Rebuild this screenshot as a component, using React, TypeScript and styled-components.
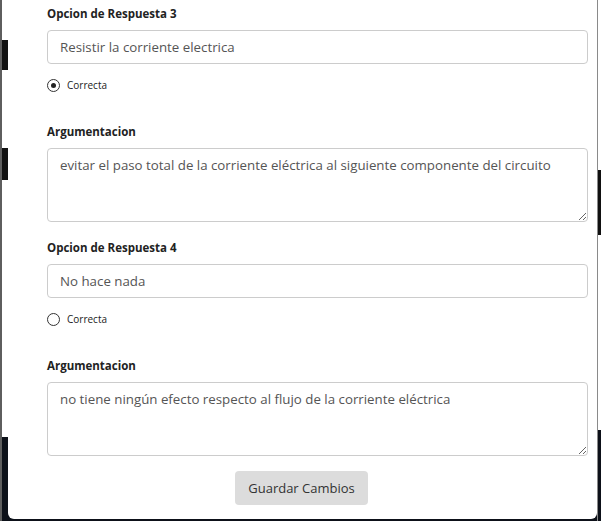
import React from "react";
import styled, { createGlobalStyle } from "styled-components";

const Global = createGlobalStyle`
  html, body { margin: 0; padding: 0; background: #fff; }
  body { font-family: "Open Sans", "Liberation Sans", sans-serif; }
`;

const Screen = styled.div`
  display: flex;
  width: 601px;
  height: 521px;
  overflow: hidden;
  background: #fff;
`;

const Edge = styled.div<{ $w: number; $line: "left" | "right" }>`
  box-sizing: border-box;
  width: ${(p) => p.$w}px;
  flex: none;
  display: flex;
  flex-direction: column;
  ${(p) => (p.$line === "left" ? "border-left: 2px solid #5e5e5e;" : "border-left: 1px solid #8a8a8a;")}
`;

const Seg = styled.div<{ $h: number; $c: string }>`
  height: ${(p) => p.$h}px;
  flex: none;
  background: ${(p) => p.$c};
`;

const SegFill = styled.div<{ $c: string }>`
  flex: 1;
  background: ${(p) => p.$c};
`;

const ModalWrap = styled.div`
  flex: 1;
  display: flex;
  flex-direction: column;
  background: #0d1119;
`;

const Modal = styled.div`
  flex: 1;
  background: #fff;
  border-radius: 0 0 6px 6px;
  margin-bottom: 2px;
  padding: 6px 9px 0 39px;
  display: flex;
  flex-direction: column;
`;

const Group = styled.div<{ $mb: number }>`
  display: flex;
  flex-direction: column;
  margin-bottom: ${(p) => p.$mb}px;
`;

const Label = styled.label`
  font-size: 11.5px;
  font-weight: 700;
  line-height: 16px;
  color: #222;
  margin-bottom: 8px;
`;

const Input = styled.input`
  box-sizing: border-box;
  width: 100%;
  height: 34px;
  border: 1px solid #ccc;
  border-radius: 4px;
  padding: 0 12px;
  font-family: inherit;
  font-size: 13.3px;
  color: #555;
  outline: none;
`;

const TextArea = styled.textarea`
  box-sizing: border-box;
  width: 100%;
  height: 74px;
  border: 1px solid #ccc;
  border-radius: 4px;
  padding: 6px 12px;
  font-family: inherit;
  font-size: 13.3px;
  line-height: 20px;
  color: #555;
  outline: none;
  resize: vertical;
  display: block;
`;

const RadioRow = styled.label`
  display: flex;
  align-items: center;
  gap: 7px;
  margin-top: 14px;
  font-size: 10px;
  color: #222;
  line-height: 15px;
`;

const Radio = styled.input`
  appearance: none;
  margin: 0;
  width: 13px;
  height: 13px;
  border: 1px solid #333;
  border-radius: 50%;
  box-sizing: border-box;
  display: grid;
  place-items: center;
  &:checked::after {
    content: "";
    width: 5px;
    height: 5px;
    border-radius: 50%;
    background: #222;
  }
`;

const Footer = styled.div`
  display: flex;
  justify-content: center;
  padding-top: 15px;
`;

const Button = styled.button`
  height: 34px;
  padding: 0 13px;
  border: none;
  border-radius: 4px;
  background: #dcdcdc;
  color: #333;
  font-family: inherit;
  font-size: 13px;
  margin-right: 32px;
`;

const options = [
  {
    n: 3,
    answer: "Resistir la corriente electrica",
    correct: true,
    arg: "evitar el paso total de la corriente eléctrica al siguiente componente del circuito",
  },
  {
    n: 4,
    answer: "No hace nada",
    correct: false,
    arg: "no tiene ningún efecto respecto al flujo de la corriente eléctrica",
  },
];

export default function App() {
  return (
    <>
      <Global />
      <Screen>
        <Edge $w={8} $line="left">
          <Seg $h={40} $c="#fff" />
          <Seg $h={30} $c="#111" />
          <Seg $h={78} $c="#fff" />
          <Seg $h={32} $c="#111" />
          <Seg $h={257} $c="#fff" />
          <SegFill $c="#0d1119" />
        </Edge>
        <ModalWrap>
          <Modal>
            {options.map((o, i) => (
              <React.Fragment key={o.n}>
                <Group $mb={31}>
                  <Label>Opcion de Respuesta {o.n}</Label>
                  <Input defaultValue={o.answer} />
                  <RadioRow>
                    <Radio type="radio" name={`r${o.n}`} defaultChecked={o.correct} />
                    Correcta
                  </RadioRow>
                </Group>
                <Group $mb={i === 0 ? 18 : 0}>
                  <Label>Argumentacion</Label>
                  <TextArea defaultValue={o.arg} />
                </Group>
              </React.Fragment>
            ))}
            <Footer>
              <Button>Guardar Cambios</Button>
            </Footer>
          </Modal>
        </ModalWrap>
        <Edge $w={4} $line="right">
          <Seg $h={170} $c="#fff" />
          <Seg $h={65} $c="#111" />
          <Seg $h={195} $c="#fff" />
          <SegFill $c="#0d1119" />
        </Edge>
      </Screen>
    </>
  );
}
